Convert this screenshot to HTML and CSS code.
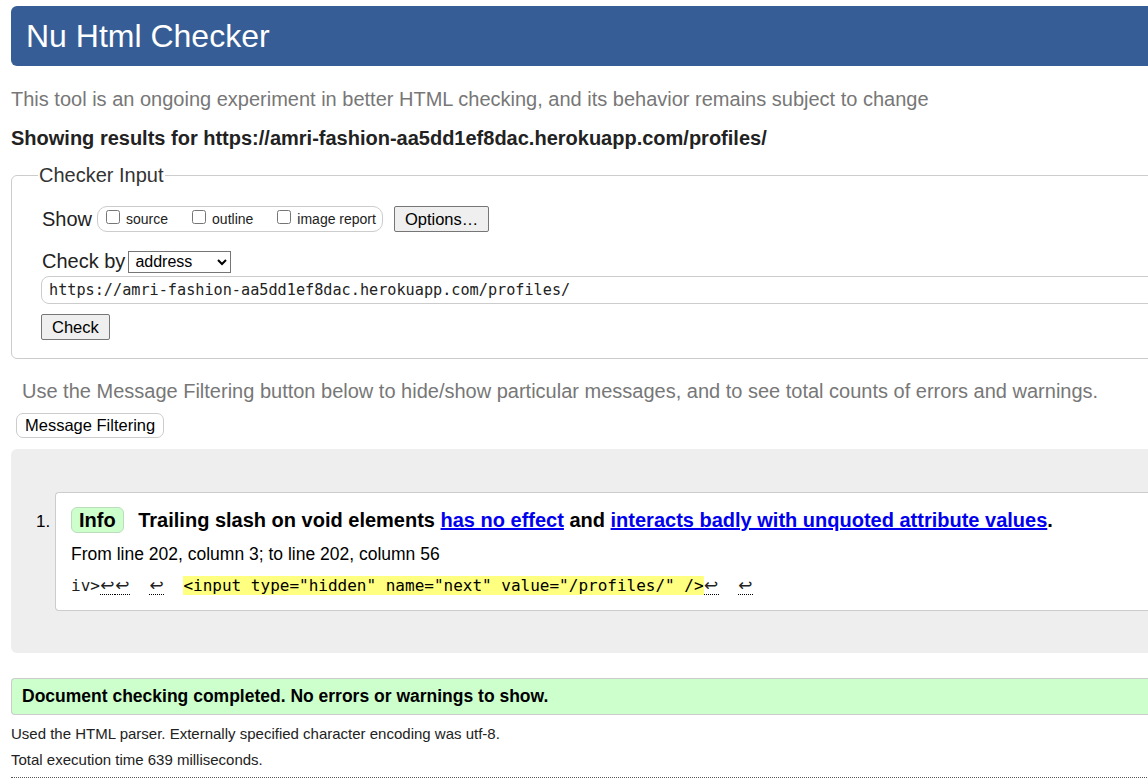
FILE: index.html
```html
<!DOCTYPE html>
<html lang="en">
<head>
<meta charset="utf-8">
<title>Nu Html Checker</title>
<link rel="stylesheet" href="styles.css">
</head>
<body>
<div class="page">
  <h1 class="masthead">Nu Html Checker</h1>
  <p class="intro">This tool is an ongoing experiment in better HTML checking, and its behavior remains subject to change</p>
  <p class="showing">Showing results for https://amri-fashion-aa5dd1ef8dac.herokuapp.com/profiles/</p>

  <fieldset class="checker">
    <legend>Checker Input</legend>
    <div class="row show-row">
      <span class="row-label">Show</span>
      <span class="opts">
        <label><input type="checkbox"> source</label>
        <label><input type="checkbox"> outline</label>
        <label><input type="checkbox"> image report</label>
      </span>
      <button class="btn">Options…</button>
    </div>
    <div class="row by-row">
      <span class="row-label">Check by</span>
      <select class="sel"><option>address</option></select>
    </div>
    <input class="url" type="text" value="https://amri-fashion-aa5dd1ef8dac.herokuapp.com/profiles/">
    <div class="row submit-row"><button class="btn">Check</button></div>
  </fieldset>

  <p class="filter-note">Use the Message Filtering button below to hide/show particular messages, and to see total counts of errors and warnings.</p>
  <button class="filter-btn">Message Filtering</button>

  <div class="results">
    <ol class="msgs">
      <li class="msg">
        <p class="msg-title"><span class="badge">Info</span> <strong>Trailing slash on void elements <a href="#">has no effect</a> and <a href="#">interacts badly with unquoted attribute values</a>.</strong></p>
        <p class="loc">From line 202, column 3; to line 202, column 56</p>
        <p class="extract"><code>iv&gt;<span class="lf">↩</span><span class="lf">↩</span>  <span class="lf">↩</span>  <b class="hl">&lt;input type="hidden" name="next" value="/profiles/" /&gt;</b><span class="lf">↩</span>  <span class="lf">↩</span></code></p>
      </li>
    </ol>
  </div>

  <p class="done">Document checking completed. No errors or warnings to show.</p>
  <p class="details">Used the HTML parser. Externally specified character encoding was utf-8.</p>
  <p class="details">Total execution time 639 milliseconds.</p>
  <hr class="rule">
</div>
</body>
</html>
```

FILE: styles.css
```css
html, body {
  margin: 0;
  padding: 0;
  overflow: hidden;
  background: #fff;
}
body {
  font-family: "Liberation Sans", Arial, sans-serif;
  color: #000;
}
.page {
  width: 1180px;
  padding: 6px 0 0 11px;
}
.masthead {
  margin: 0;
  height: 60px;
  box-sizing: border-box;
  padding: 0 0 0 15px;
  background: #365d95;
  color: #fff;
  font-size: 32px;
  font-weight: normal;
  line-height: 60px;
  border-radius: 6px;
}
.intro {
  margin: 20px 0 0;
  font-size: 20px;
  line-height: 26px;
  color: #777;
}
.showing {
  margin: 13px 0 0;
  font-size: 20px;
  line-height: 26px;
  font-weight: bold;
  color: #222;
}
.checker {
  margin: 13px 0 0;
  padding: 19px 0 18px 30px;
  border: 1px solid #ccc;
  border-radius: 6px;
  min-width: 0;
}
.checker legend {
  padding: 0 1px;
  margin-left: -4px;
  font-size: 20px;
  color: #333;
}
.row {
  display: flex;
  align-items: center;
}
.row-label {
  font-size: 20px;
  color: #222;
  margin-right: 5px;
}
.by-row .row-label {
  margin-right: 3px;
}
.opts {
  display: flex;
  align-items: center;
  gap: 24px;
  height: 24px;
  padding: 0 6px 0 8px;
  border: 1px solid #ccc;
  border-radius: 10px;
  font-size: 14px;
  color: #222;
}
.opts label {
  display: flex;
  align-items: center;
}
.opts input {
  margin: -4px 6px 0 0;
  width: 14px;
  height: 14px;
}
.btn {
  font-family: "Liberation Sans", Arial, sans-serif;
  font-size: 16.5px;
  color: #000;
  background: #efefef;
  border: 1px solid #767676;
  border-radius: 2px;
  height: 26px;
  padding: 0 10px;
}
.show-row .btn {
  margin-left: 11px;
}
.by-row {
  margin-top: 18px;
}
.sel {
  font-family: "Liberation Sans", Arial, sans-serif;
  font-size: 16px;
  height: 22px;
  width: 103px;
  border: 1px solid #767676;
  border-radius: 0;
  background: #fff;
  color: #000;
  padding: 0 2px;
}
.url {
  display: block;
  box-sizing: border-box;
  width: 1140px;
  height: 28px;
  margin: 3px 0 0 -1px;
  padding: 0 7px;
  border: 1px solid #ccc;
  border-radius: 8px;
  font-family: "DejaVu Sans Mono", "Liberation Mono", monospace;
  font-size: 15.2px;
  color: #222;
}
.submit-row {
  margin-top: 10px;
  margin-left: -1px;
}
.filter-note {
  margin: 19px 0 0 11px;
  font-size: 20px;
  line-height: 26px;
  color: #777;
}
.filter-btn {
  display: block;
  margin: 9px 0 0 5px;
  height: 25px;
  padding: 0 8px;
  background: #fff;
  border: 1px solid #ccc;
  border-radius: 7px;
  font-family: "Liberation Sans", Arial, sans-serif;
  font-size: 16.5px;
  color: #000;
}
.results {
  margin-top: 11px;
  background: #eee;
  border-radius: 6px 0 0 6px;
  padding: 43px 0 42px;
}
.msgs {
  margin: 0;
  padding-left: 44px;
  font-size: 17px;
}
.msg {
  background: #fff;
  border: 1px solid #ccc;
  border-right: none;
  border-radius: 4px 0 0 4px;
  padding: 14px 0 13px 15px;
}
.msg::marker {
  font-size: 17px;
}
.msg p {
  margin: 0;
}
.msg-title {
  font-size: 20px;
  line-height: 26px;
}
.badge {
  display: inline-block;
  box-sizing: border-box;
  height: 26px;
  padding: 0 7px;
  margin-right: 9px;
  background: #cfc;
  border: 1px solid #bdb;
  border-radius: 6px;
  font-weight: bold;
  line-height: 24px;
  vertical-align: top;
}
.msg-title a {
  color: #0000ee;
}
.msg .loc {
  margin-top: 10px;
  font-size: 17.5px;
  line-height: 22px;
}
.msg .extract {
  margin-top: 10px;
  line-height: 22px;
}
.extract code {
  font-family: "DejaVu Sans Mono", "Liberation Mono", monospace;
  font-size: 16px;
  white-space: pre;
  color: #222;
}
.lf {
  display: inline-block;
  width: 15px;
  text-align: center;
  font-family: "DejaVu Sans", sans-serif;
  font-size: 17px;
  line-height: 18px;
  border-bottom: 1px dotted #000;
}
.hl {
  font-weight: normal;
  background: #ffff80;
  color: #000;
}
.done {
  margin: 25px 0 0;
  box-sizing: border-box;
  height: 37px;
  padding: 0 10px;
  background: #cfc;
  border: 1px solid #ccc;
  border-right: none;
  border-radius: 4px 0 0 4px;
  font-size: 17.5px;
  font-weight: bold;
  line-height: 35px;
}
.details {
  margin: 10px 0 0;
  font-size: 15px;
  line-height: 18px;
  color: #222;
}
.details + .details {
  margin-top: 8px;
}
.rule {
  margin: 8px 0 0;
  border: none;
  border-top: 1px dotted #555;
}
```
